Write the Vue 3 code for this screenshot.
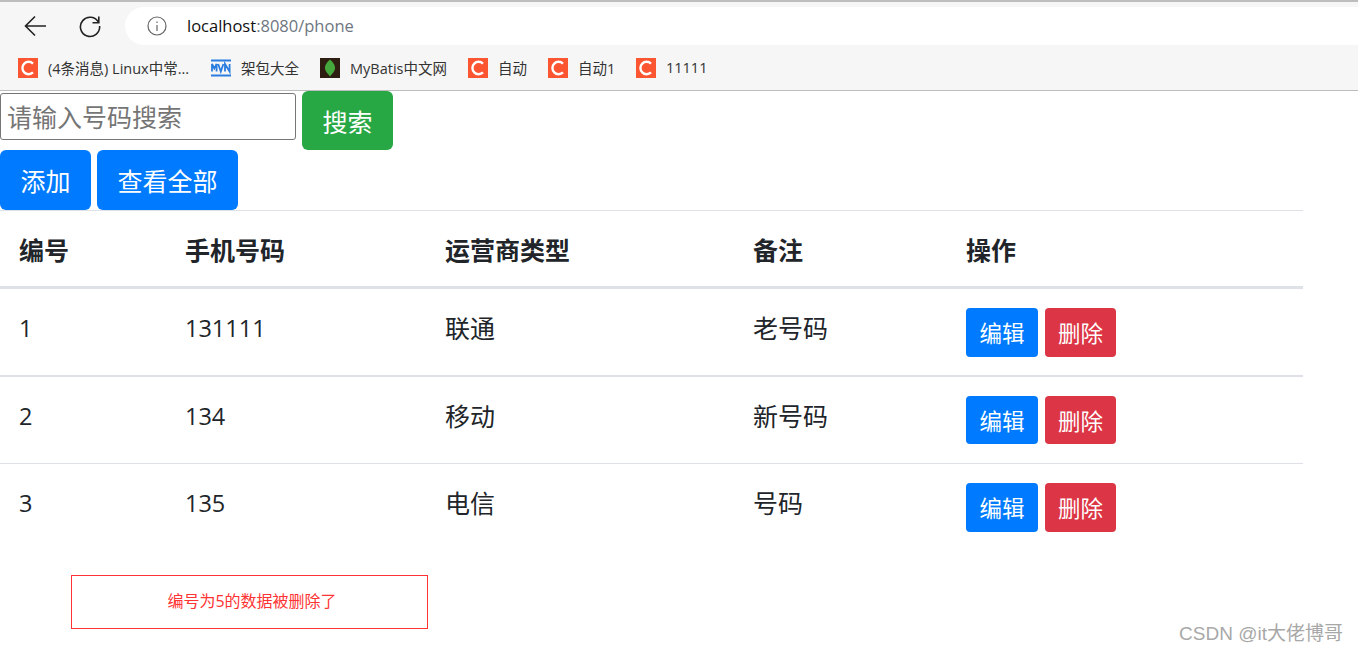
<script setup>
const bookmarks = [
  { icon: "c", label: "(4条消息) Linux中常...", width: 143 },
  { icon: "mvn", label: "架包大全", width: 59 },
  { icon: "leaf", label: "MyBatis中文网", width: 98 },
  { icon: "c", label: "自动", width: 30 },
  { icon: "c", label: "自动1", width: 38 },
  { icon: "c", label: "11111", width: 40 }
];

const phones = [
  { id: 1, number: "131111", type: "联通", remark: "老号码" },
  { id: 2, number: "134", type: "移动", remark: "新号码" },
  { id: 3, number: "135", type: "电信", remark: "号码" }
];
</script>

<template>
  <div class="page">
    <header class="browser">
      <div class="toolbar">
        <button class="nav-btn back" aria-label="Back">
          <svg width="26" height="26" viewBox="0 0 26 26" fill="none" stroke="#222" stroke-width="1.6">
            <path d="M24 13H3.5M13 3.5L3.5 13L13 22.5" />
          </svg>
        </button>
        <button class="nav-btn reload" aria-label="Reload">
          <svg width="24" height="24" viewBox="0 0 24 24" fill="none" stroke="#222" stroke-width="1.6">
            <path d="M20.6 8.5A9.6 9.6 0 1 0 21.6 12" />
            <path d="M20.8 2.5V8.8H14.5" />
          </svg>
        </button>
        <div class="address">
          <svg class="info" width="20" height="20" viewBox="0 0 20 20" fill="none" stroke="#666" stroke-width="1.2">
            <circle cx="10" cy="10" r="9" />
            <path d="M10 9V15M10 5.5V7" />
          </svg>
          <span class="host">localhost</span><span class="path">:8080/phone</span>
        </div>
      </div>
      <div class="bookmarks">
        <div v-for="(b, i) in bookmarks" :key="i" class="bookmark">
          <span v-if="b.icon === 'c'" class="fav fav-c">
            <svg width="20" height="20" viewBox="0 0 20 20" fill="none" stroke="#fff" stroke-width="2.4">
              <path d="M15 5.6A6.2 6.2 0 1 0 15 14.4" />
            </svg>
          </span>
          <span v-else-if="b.icon === 'mvn'" class="fav">
            <svg width="20" height="20" viewBox="0 0 20 20" fill="none" stroke="#2b7de0">
              <path d="M0 2.5H20M0 17.500H20" stroke-width="2.2" />
              <path d="M1 13.500V6L3.300 10.500L5.600 6V13.500M7.200 6L9.800 13.500L12.400 6M14 13.500V6L18.600 13.500V6" stroke-width="1.8" />
            </svg>
          </span>
          <span v-else class="fav fav-leaf">
            <svg width="20" height="20" viewBox="0 0 20 20">
              <path d="M10 1.500C14 5 15.500 8 15 11C14.500 14 11.500 16 10 18.500C8.500 16 5.500 14 5 11C4.500 8 6 5 10 1.500Z" fill="#45a83c" />
            </svg>
          </span>
          <span class="bm-label" :style="{ width: b.width + 'px' }">{{ b.label }}</span>
        </div>
      </div>
    </header>

    <main class="content">
      <div class="search-row">
        <input class="search-input" type="text" placeholder="请输入号码搜索" />
        <button class="btn btn-green">搜索</button>
      </div>
      <div class="action-row">
        <button class="btn btn-blue btn-add">添加</button>
        <button class="btn btn-blue">查看全部</button>
      </div>

      <table class="phone-table">
        <colgroup>
          <col style="width: 166px" />
          <col style="width: 260px" />
          <col style="width: 308px" />
          <col style="width: 213px" />
          <col style="width: 356px" />
        </colgroup>
        <thead>
          <tr>
            <th>编号</th>
            <th>手机号码</th>
            <th>运营商类型</th>
            <th>备注</th>
            <th>操作</th>
          </tr>
        </thead>
        <tbody>
          <tr v-for="p in phones" :key="p.id">
            <td class="num">{{ p.id }}</td>
            <td class="num">{{ p.number }}</td>
            <td>{{ p.type }}</td>
            <td>{{ p.remark }}</td>
            <td class="ops">
              <button class="btn-sm btn-blue">编辑</button>
              <button class="btn-sm btn-red">删除</button>
            </td>
          </tr>
        </tbody>
      </table>
    </main>

    <div class="message">编号为5的数据被删除了</div>
    <div class="watermark">CSDN @it大佬博哥</div>
  </div>
</template>

<style>
html,
body {
  margin: 0;
  background: #fff;
  overflow: hidden;
}
</style>

<style scoped>
.page {
  position: relative;
  width: 1358px;
  height: 651px;
  overflow: hidden;
  font-family: "Open Sans", "Noto Sans CJK SC", sans-serif;
  color: #212529;
}

.browser {
  height: 91px;
  box-sizing: border-box;
  background: #f6f6f6;
  border-top: 2px solid #bdbdbd;
  border-bottom: 1px solid #bdbdbd;
}

.toolbar {
  display: flex;
  align-items: center;
  height: 43px;
  padding-top: 5px;
  box-sizing: border-box;
}

.nav-btn {
  display: flex;
  align-items: center;
  justify-content: center;
  padding: 0;
  border: none;
  background: none;
}

.back {
  width: 26px;
  margin-left: 22px;
}

.reload {
  width: 24px;
  margin-left: 30px;
}

.address {
  flex: 1;
  display: flex;
  align-items: center;
  height: 38px;
  margin-left: 23px;
  padding-left: 22px;
  background: #fff;
  border-radius: 19px 0 0 19px;
  font-size: 16.5px;
}

.info {
  margin-right: 20px;
}

.host,
.path {
  margin-top: -2px;
}

.host {
  color: #111;
}

.path {
  color: #6e7681;
}

.bookmarks {
  display: flex;
  align-items: center;
  height: 45px;
  padding-left: 18px;
  gap: 20px;
}

.bookmark {
  display: flex;
  align-items: center;
  gap: 10px;
}

.fav {
  display: block;
  width: 20px;
  height: 20px;
}

.fav svg {
  display: block;
}

.fav-c {
  background: #fc5531;
}

.fav-leaf {
  background: #2e1e12;
}

.bm-label {
  font-size: 14.5px;
  white-space: nowrap;
  color: #333;
}

.content {
  width: 1303px;
}

.search-row {
  display: flex;
  align-items: flex-start;
  gap: 6px;
  height: 59px;
}

.search-input {
  width: 296px;
  height: 47px;
  margin-top: 2px;
  padding: 0 6px;
  box-sizing: border-box;
  border: 1px solid #767676;
  border-radius: 3px;
  outline: none;
  font-family: inherit;
  font-size: 25px;
}

.search-input::placeholder {
  color: #757575;
}

.action-row {
  display: flex;
  gap: 6px;
  height: 60px;
}

.btn {
  height: 59px;
  padding: 0 20.5px;
  border: none;
  border-radius: 6px;
  font-family: inherit;
  font-size: 25px;
  color: #fff;
}

.action-row .btn {
  height: 60px;
}

.btn-green {
  background: #28a745;
}

.btn-blue {
  background: #007bff;
}

.btn-red {
  background: #dc3545;
}

.phone-table {
  width: 1303px;
  table-layout: fixed;
  border-collapse: separate;
  border-spacing: 0;
  font-size: 25px;
}

th {
  height: 79px;
  box-sizing: border-box;
  padding: 0 19px;
  border-top: 1px solid #dee2e6;
  border-bottom: 3px solid #dee2e6;
  font-weight: 700;
  text-align: left;
}

td {
  height: 88px;
  box-sizing: border-box;
  padding: 19px 19px 0;
  vertical-align: top;
  border-bottom: 2px solid #dee2e6;
  line-height: 40px;
}

tbody tr:nth-child(2) td {
  height: 87px;
  border-bottom-width: 1px;
}

tbody tr:nth-child(2) .btn-sm {
  height: 48px;
}

tbody tr:last-child td {
  border-bottom: none;
}

.num {
  font-size: 23.5px;
}

.ops {
  display: flex;
  gap: 7px;
}

.btn-sm {
  width: 72px;
  height: 49px;
  padding: 0;
  border: none;
  border-radius: 4px;
  font-family: inherit;
  font-size: 22.5px;
  color: #fff;
}

.btn-sm.btn-red {
  width: 71px;
}

.message {
  position: absolute;
  left: 71px;
  top: 575px;
  width: 357px;
  height: 54px;
  padding: 0 0 5px 5px;
  box-sizing: border-box;
  border: 1px solid #f33;
  display: flex;
  align-items: center;
  justify-content: center;
  font-size: 16px;
  color: #f33;
}

.watermark {
  position: absolute;
  right: 15px;
  top: 618px;
  font-family: "Liberation Sans", "Noto Sans CJK SC", sans-serif;
  font-size: 19px;
  color: #a8a8a8;
}
</style>
